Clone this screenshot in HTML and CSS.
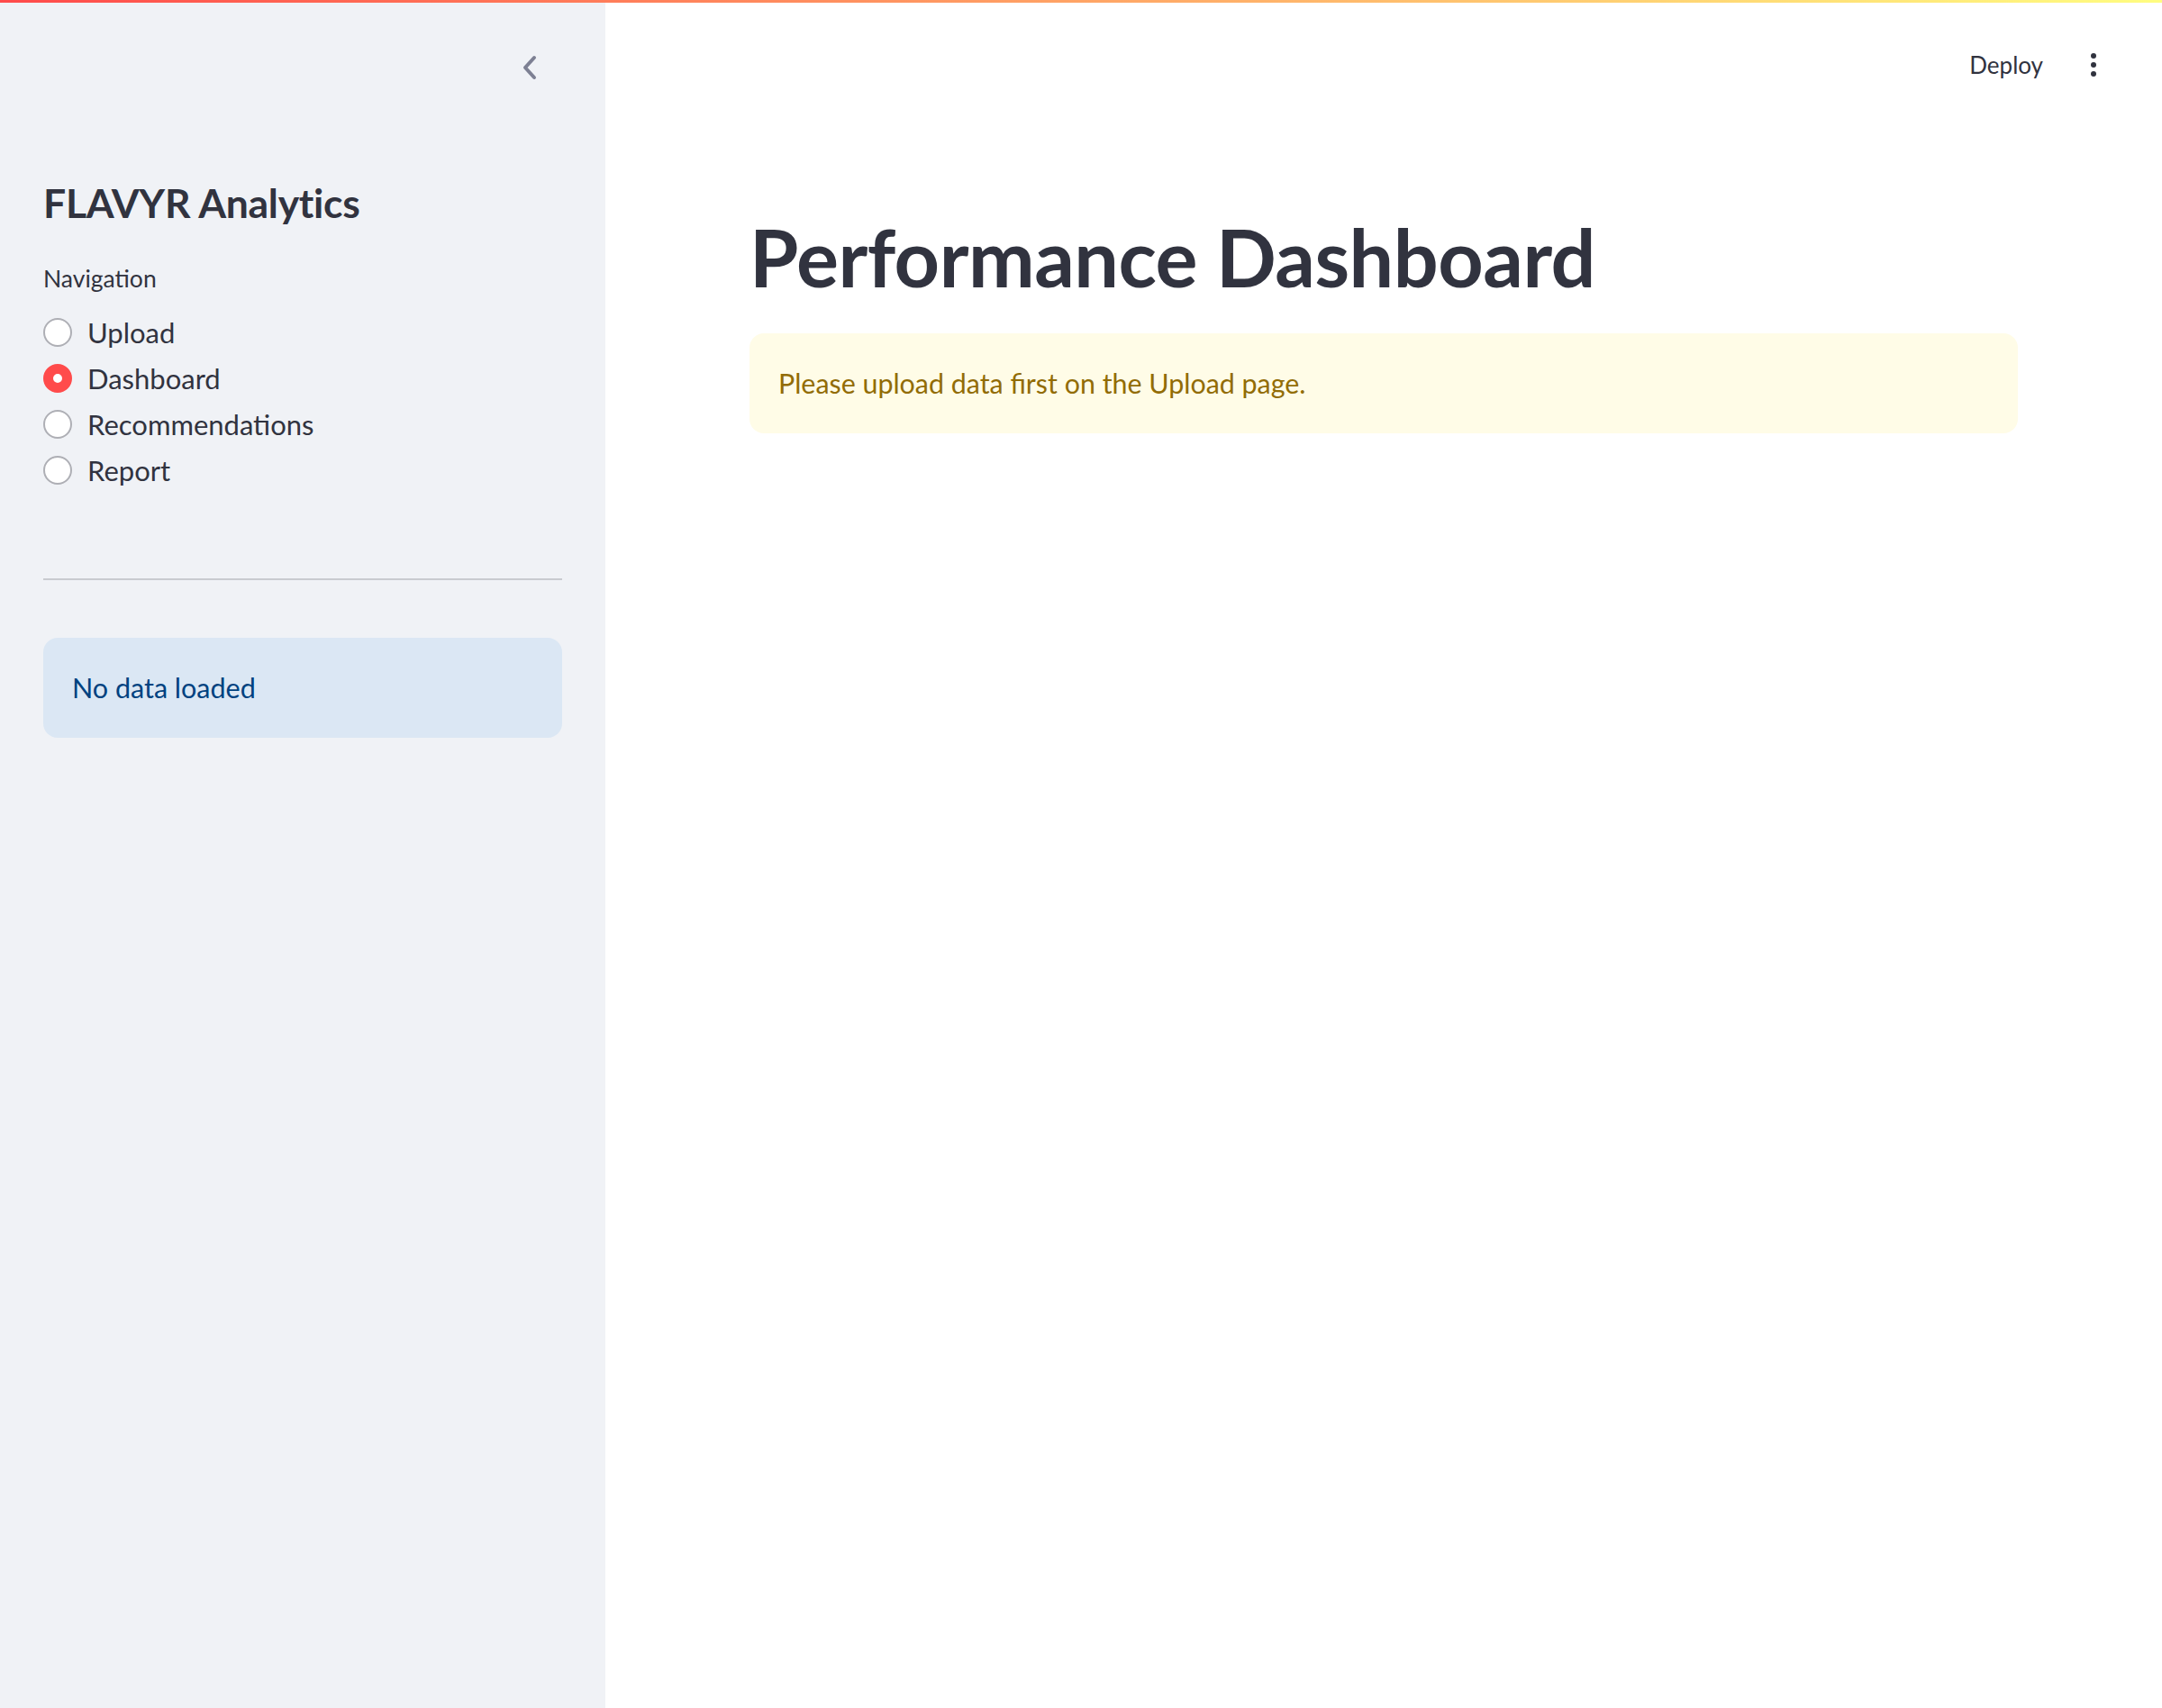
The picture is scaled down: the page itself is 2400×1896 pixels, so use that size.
FILE: index.html
```html
<!DOCTYPE html>
<html lang="en">
<head>
<meta charset="utf-8">
<title>FLAVYR Analytics</title>
<link rel="stylesheet" href="styles.css">
</head>
<body>
<div class="decoration"></div>
<div class="app">
  <aside class="sidebar">
    <div class="sidebar-header">
      <button class="collapse-btn" aria-label="Collapse sidebar">
        <svg width="20" height="30" viewBox="0 0 20 30"><path d="M15 4 L5 15 L15 26" fill="none" stroke="#7d8093" stroke-width="4" stroke-linecap="round" stroke-linejoin="round"/></svg>
      </button>
    </div>
    <h1 class="sidebar-title">FLAVYR Analytics</h1>
    <div class="nav-label">Navigation</div>
    <div class="radio-group">
      <label class="radio-row"><span class="radio"></span><span class="radio-text">Upload</span></label>
      <label class="radio-row"><span class="radio checked"></span><span class="radio-text">Dashboard</span></label>
      <label class="radio-row"><span class="radio"></span><span class="radio-text">Recommendations</span></label>
      <label class="radio-row"><span class="radio"></span><span class="radio-text">Report</span></label>
    </div>
    <hr class="divider">
    <div class="info-box">No data loaded</div>
  </aside>
  <main class="main">
    <header class="toolbar">
      <span class="deploy">Deploy</span>
      <span class="kebab"><i></i><i></i><i></i></span>
    </header>
    <section class="block">
      <h1 class="page-title">Performance Dashboard</h1>
      <div class="warning-box">Please upload data first on the Upload page.</div>
    </section>
  </main>
</div>
</body>
</html>
```
FILE: styles.css
```css
html, body {
  margin: 0;
  padding: 0;
  height: 100%;
  background: #ffffff;
  font-family: Lato, "Noto Sans", sans-serif;
  color: #31333f;
}
.decoration {
  height: 3px;
  background: linear-gradient(90deg, #ff4b4b, #fffd80);
}
.app {
  display: flex;
  height: calc(100% - 3px);
}
.sidebar {
  width: 672px;
  flex: 0 0 672px;
  box-sizing: border-box;
  background: #f0f2f6;
  padding: 0 48px;
}
.sidebar-header {
  display: flex;
  justify-content: flex-end;
  padding-top: 52px;
  padding-right: 16px;
}
.collapse-btn {
  width: 40px;
  height: 40px;
  border: 0;
  padding: 0;
  background: transparent;
  display: flex;
  align-items: center;
  justify-content: center;
}
.sidebar-title {
  margin: 101px 0 0;
  font-size: 44.5px;
  line-height: 57.6px;
  font-weight: 700;
  letter-spacing: -0.3px;
  color: #31333f;
}
.nav-label {
  margin-top: 34px;
  font-size: 26.5px;
  line-height: 42px;
}
.radio-group {
  margin-top: 14px;
  display: flex;
  flex-direction: column;
}
.radio-row {
  height: 51px;
  display: flex;
  align-items: center;
  gap: 17px;
}
.radio {
  width: 32px;
  height: 32px;
  box-sizing: border-box;
  border-radius: 50%;
  border: 2px solid #aeafb5;
  background: #ffffff;
  flex: 0 0 32px;
}
.radio.checked {
  border: 11px solid #ff4b4b;
}
.radio-text {
  font-size: 31px;
  line-height: 40px;
}
.divider {
  margin: 94px 0 0;
  border: 0;
  height: 2px;
  background: #c9cbd0;
}
.info-box {
  margin-top: 64px;
  height: 111px;
  box-sizing: border-box;
  padding: 0 32px;
  display: flex;
  align-items: center;
  background: #dbe7f4;
  border-radius: 16px;
  color: #004280;
  font-size: 30.5px;
}
.main {
  flex: 1;
  display: flex;
  flex-direction: column;
}
.toolbar {
  display: flex;
  justify-content: flex-end;
  align-items: center;
  height: 40px;
  margin-top: 49px;
  padding-right: 56px;
  gap: 36px;
}
.deploy {
  font-size: 26px;
  line-height: 40px;
}
.kebab {
  width: 40px;
  height: 40px;
  display: flex;
  flex-direction: column;
  align-items: center;
  justify-content: center;
  gap: 4px;
}
.kebab i {
  width: 6px;
  height: 6px;
  border-radius: 50%;
  background: #31333f;
}
.block {
  width: 1408px;
  margin: 0 auto;
  padding: 0 32px;
}
.page-title {
  margin: 141px 0 0;
  font-size: 88px;
  line-height: 105.6px;
  font-weight: 700;
  letter-spacing: -0.5px;
  color: #31333f;
}
.warning-box {
  margin-top: 31px;
  height: 111px;
  box-sizing: border-box;
  padding: 0 32px;
  display: flex;
  align-items: center;
  background: #fffce7;
  border-radius: 16px;
  color: #926c05;
  font-size: 30.4px;
}
```
